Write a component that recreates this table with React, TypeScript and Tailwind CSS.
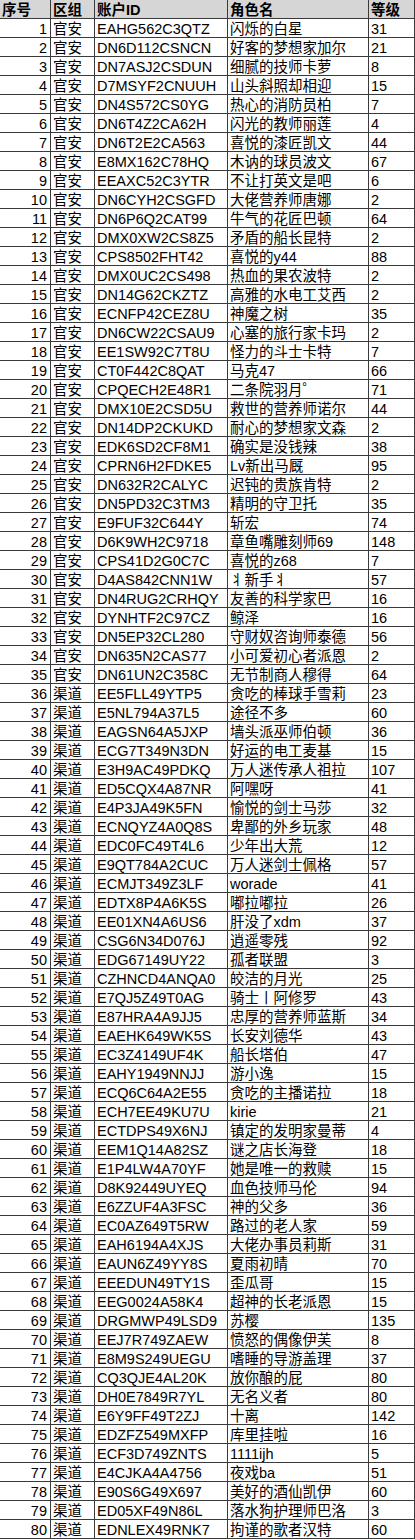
import React from 'react';

type Row = [string, string, string, number];

const raw = `EAHG562C3QTZ|闪烁的白星|31
DN6D112CSNCN|好客的梦想家加尔|21
DN7ASJ2CSDUN|细腻的技师卡萝|8
D7MSYF2CNUUH|山头斜照却相迎|15
DN4S572CS0YG|热心的消防员柏|7
DN6T4Z2CA62H|闪光的教师丽莲|4
DN6T2E2CA563|喜悦的漆匠凯文|44
E8MX162C78HQ|木讷的球员波文|67
EEAXC52C3YTR|不让打英文是吧|6
DN6CYH2CSGFD|大佬营养师唐娜|2
DN6P6Q2CAT99|牛气的花匠巴顿|64
DMX0XW2CS8Z5|矛盾的船长昆特|2
CPS8502FHT42|喜悦的y44|88
DMX0UC2CS498|热血的果农波特|2
DN14G62CKZTZ|高雅的水电工艾西|2
ECNFP42CEZ8U|神魔之树|35
DN6CW22CSAU9|心塞的旅行家卡玛|2
EE1SW92C7T8U|怪力的斗士卡特|7
CT0F442C8QAT|马克47|66
CPQECH2E48R1|二条院羽月゜|71
DMX10E2CSD5U|救世的营养师诺尔|44
DN14DP2CKUKD|耐心的梦想家文森|2
EDK6SD2CF8M1|确实是没钱辣|38
CPRN6H2FDKE5|Lv新出马厩|95
DN632R2CALYC|迟钝的贵族肯特|2
DN5PD32C3TM3|精明的守卫托|35
E9FUF32C644Y|斩宏|74
D6K9WH2C9718|章鱼嘴雕刻师69|148
CPS41D2G0C7C|喜悦的z68|7
D4AS842CNN1W|丬新手丬|57
DN4RUG2CRHQY|友善的科学家巴|16
DYNHTF2C97CZ|鲸泽|16
DN5EP32CL280|守财奴咨询师泰德|56
DN635N2CAS77|小可爱初心者派恩|2
DN61UN2C358C|无节制商人穆得|64
EE5FLL49YTP5|贪吃的棒球手雪莉|23
E5NL794A37L5|途径不多|60
EAGSN64A5JXP|墙头派巫师伯顿|36
ECG7T349N3DN|好运的电工麦基|15
E3H9AC49PDKQ|万人迷传承人祖拉|107
ED5CQX4A87NR|阿嘿呀|41
E4P3JA49K5FN|愉悦的剑士马莎|32
ECNQYZ4A0Q8S|卑鄙的外乡玩家|48
EDC0FC49T4L6|少年出大荒|12
E9QT784A2CUC|万人迷剑士佩格|57
ECMJT349Z3LF|worade|41
EDTX8P4A6K5S|嘟拉嘟拉|26
EE01XN4A6US6|肝没了xdm|37
CSG6N34D076J|逍遥零残|92
EDG67149UY22|孤者联盟|3
CZHNCD4ANQA0|皎洁的月光|25
E7QJ5Z49T0AG|骑士丨阿修罗|43
E87HRA4A9JJ5|忠厚的营养师蓝斯|34
EAEHK649WK5S|长安刘德华|43
EC3Z4149UF4K|船长塔伯|47
EAHY1949NNJJ|游小逸|15
ECQ6C64A2E55|贪吃的主播诺拉|18
ECH7EE49KU7U|kirie|21
ECTDPS49X6NJ|镇定的发明家曼蒂|4
EEM1Q14A82SZ|谜之店长海登|18
E1P4LW4A70YF|她是唯一的救赎|15
D8K92449UYEQ|血色技师马伦|94
E6ZZUF4A3FSC|神的父多|36
EC0AZ649T5RW|路过的老人家|59
EAH6194A4XJS|大佬办事员莉斯|31
EAUN6Z49YY8S|夏雨初晴|70
EEEDUN49TY1S|歪瓜哥|15
EEG0024A58K4|超神的长老派恩|15
DRGMWP49LSD9|苏樱|135
EEJ7R749ZAEW|愤怒的偶像伊芙|8
E8M9S249UEGU|嗜睡的导游盖理|37
CQ3QJE4AL20K|放你酿的屁|80
DH0E7849R7YL|无名义者|80
E6Y9FF49T2ZJ|十离|142
EDZFZ549MXFP|库里挂啦|16
ECF3D749ZNTS|1111ijh|5
E4CJKA4A4756|夜戏ba|51
E90S6G49X697|美好的酒仙凯伊|60
ED05XF49N86L|落水狗护理师巴洛|3
EDNLEX49RNK7|拘谨的歌者汉特|60`;

const rows: Row[] = raw.split('\n').map((line, i) => {
  const [id, name, level] = line.split('|');
  return [i < 35 ? '官安' : '渠道', id, name, Number(level)];
});

const cell = 'h-[19px] border-r border-b border-[#3a3a3a] overflow-hidden whitespace-nowrap leading-[18px] pt-[1px]';

const App = () => {
  return (
    <div
      className="w-[415px] bg-white text-black text-[14.5px]"
      style={{ fontFamily: '"Liberation Sans", "Noto Sans CJK SC", sans-serif' }}
    >
      <div className="grid grid-cols-[51px_44px_133px_141px_46px]">
        {/* header */}
        <div className={`${cell} bg-[#d6d6d6] font-bold pl-[2px]`}>序号</div>
        <div className={`${cell} bg-[#d6d6d6] font-bold pl-[2px]`}>区组</div>
        <div className={`${cell} bg-[#d6d6d6] font-bold pl-[2px]`}>账户ID</div>
        <div className={`${cell} bg-[#d6d6d6] font-bold pl-[2px]`}>角色名</div>
        <div className={`${cell} bg-[#d6d6d6] font-bold pl-[2px]`}>等级</div>

        {rows.map(([group, id, name, level], i) => (
          <React.Fragment key={id}>
            <div className={`${cell} text-right pr-[3px]`}>{i + 1}</div>
            <div className={`${cell} pl-[2px]`}>{group}</div>
            <div className={`${cell} pl-[2px]`}>{id}</div>
            <div className={`${cell} pl-[2px]`}>{name}</div>
            <div className={`${cell} pl-[2px]`}>{level}</div>
          </React.Fragment>
        ))}
      </div>
    </div>
  );
};

export default App;
